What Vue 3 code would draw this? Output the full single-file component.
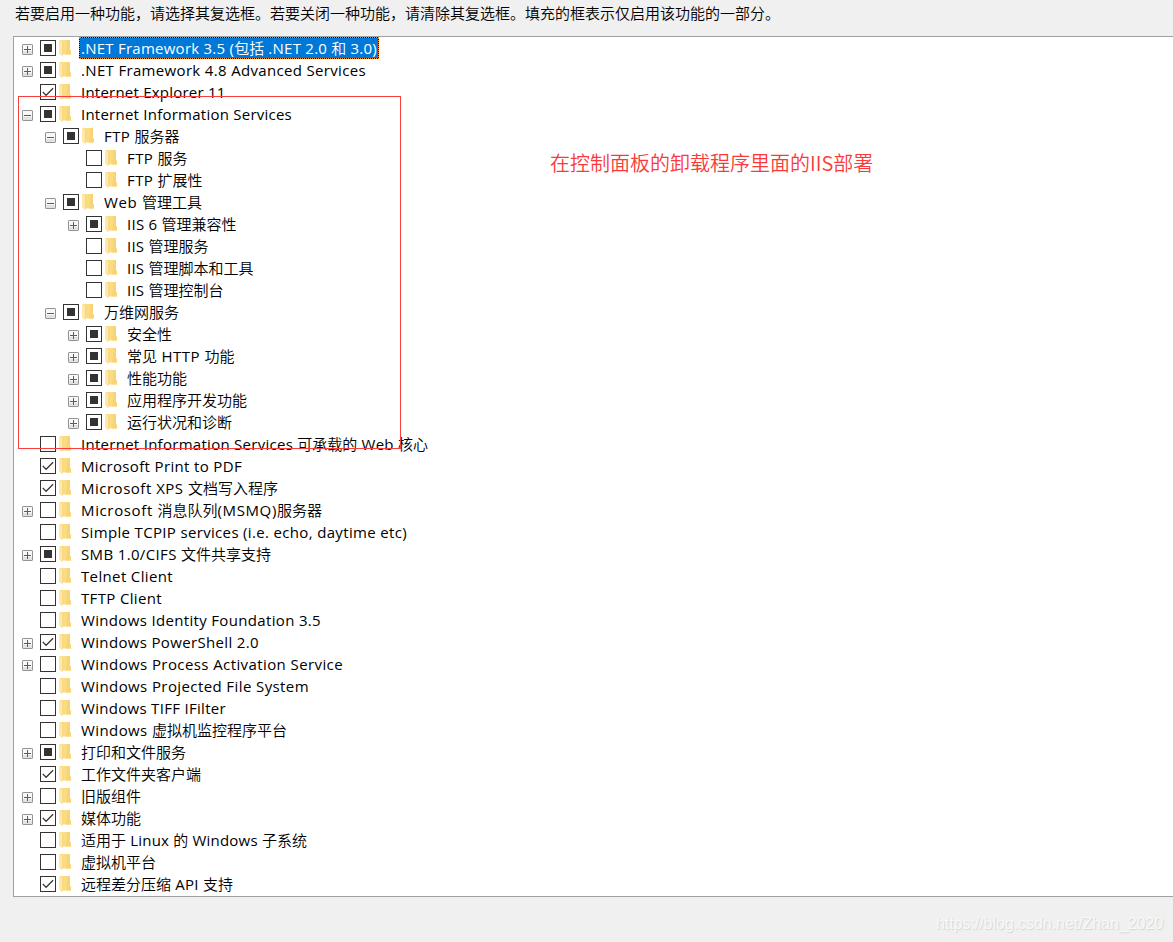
<script setup>
import { ref, onMounted } from 'vue'

// level, expander ('+', '-', ''), state (f: filled, c: checked, e: empty), label, label width
const features = [
  [0, '+', 'f', '.NET Framework 3.5 (包括 .NET 2.0 和 3.0)', 296],
  [0, '+', 'f', '.NET Framework 4.8 Advanced Services', 285],
  [0, '', 'c', 'Internet Explorer 11', 144.5],
  [0, '-', 'f', 'Internet Information Services', 211],
  [1, '-', 'f', 'FTP 服务器', 75.5],
  [2, '', 'e', 'FTP 服务', 60.5],
  [2, '', 'e', 'FTP 扩展性', 75.5],
  [1, '-', 'f', 'Web 管理工具', 98],
  [2, '+', 'f', 'IIS 6 管理兼容性', 109.5],
  [2, '', 'e', 'IIS 管理服务', 81.5],
  [2, '', 'e', 'IIS 管理脚本和工具', 126.5],
  [2, '', 'e', 'IIS 管理控制台', 96.5],
  [1, '-', 'f', '万维网服务', 0],
  [2, '+', 'f', '安全性', 0],
  [2, '+', 'f', '常见 HTTP 功能', 107.5],
  [2, '+', 'f', '性能功能', 0],
  [2, '+', 'f', '应用程序开发功能', 0],
  [2, '+', 'f', '运行状况和诊断', 0],
  [0, '', 'e', 'Internet Information Services 可承载的 Web 核心', 347],
  [0, '', 'c', 'Microsoft Print to PDF', 161],
  [0, '', 'c', 'Microsoft XPS 文档写入程序', 197],
  [0, '+', 'e', 'Microsoft 消息队列(MSMQ)服务器', 241],
  [0, '', 'e', 'Simple TCPIP services (i.e. echo, daytime etc)', 326],
  [0, '+', 'f', 'SMB 1.0/CIFS 文件共享支持', 190],
  [0, '', 'e', 'Telnet Client', 92],
  [0, '', 'e', 'TFTP Client', 81],
  [0, '', 'e', 'Windows Identity Foundation 3.5', 240],
  [0, '+', 'c', 'Windows PowerShell 2.0', 178],
  [0, '+', 'e', 'Windows Process Activation Service', 262],
  [0, '', 'e', 'Windows Projected File System', 228],
  [0, '', 'e', 'Windows TIFF IFilter', 145],
  [0, '', 'e', 'Windows 虚拟机监控程序平台', 206],
  [0, '+', 'f', '打印和文件服务', 0],
  [0, '', 'c', '工作文件夹客户端', 0],
  [0, '+', 'e', '旧版组件', 0],
  [0, '+', 'c', '媒体功能', 0],
  [0, '', 'e', '适用于 Linux 的 Windows 子系统', 226],
  [0, '', 'e', '虚拟机平台', 0],
  [0, '', 'c', '远程差分压缩 API 支持', 152],
].map(([level, expander, state, label, width]) => ({
  level, expander, state, width,
  runs: label.match(/[\x20-\x7e]+|[^\x20-\x7e]+/g).map((text) => ({ text, latin: /^[\x20-\x7e]/.test(text) })),
}))

const root = ref(null)
const tracking = ref(features.map(() => 0))

// Spread the latin runs so every label takes its nominal width.
onMounted(() => {
  const labels = root.value.querySelectorAll('.label')
  tracking.value = features.map((f, i) => {
    const chars = f.runs.filter((r) => r.latin).reduce((n, r) => n + r.text.length, 0)
    if (!f.width || !chars) return 0
    return (f.width - labels[i].querySelector('.text').getBoundingClientRect().width) / chars
  })
})
</script>

<template>
  <div ref="root" class="window">
    <p class="hint">若要启用一种功能，请选择其复选框。若要关闭一种功能，请清除其复选框。填充的框表示仅启用该功能的一部分。</p>
    <div class="tree">
      <div v-for="(f, i) in features" :key="i" class="row" :class="'level-' + f.level">
        <span class="expander">
          <svg v-if="f.expander" width="11" height="11" viewBox="0 0 11 11">
            <rect x=".5" y=".5" width="10" height="10" rx=".6" fill="#f8f8f8" stroke="#929292" />
            <path d="M1 7h9v3H1z" fill="#e2e2e2" />
            <path d="M2 5.5h7" stroke="#405c9b" />
            <path v-if="f.expander === '+'" d="M5.5 2v7" stroke="#405c9b" />
          </svg>
        </span>
        <svg class="box" width="16" height="16" viewBox="0 0 16 16">
          <rect x=".5" y=".5" width="15" height="15" fill="#fff" stroke="#333" />
          <rect v-if="f.state === 'f'" x="4" y="4" width="8" height="8" fill="#333" />
          <path v-if="f.state === 'c'" d="M2.7 7.9l3.4 3.4 7-7" fill="none" stroke="#333" stroke-width="1.25" />
        </svg>
        <svg class="folder" width="13" height="17" viewBox="0 0 13 17">
          <path d="M1 0h10v10.5h1v4H3L1 13z" fill="#fbdc82" />
          <path d="M8.5 0H11v10.5h1v4H7z" fill="#f6d477" />
          <path d="M0 0l3.6 2.2V13L2.7 16 0 13.5z" fill="#ffe9a9" />
          <path d="M3.6 2.2V13l-.9 3" fill="none" stroke="#f0cd70" stroke-width=".5" />
        </svg>
        <span class="label" :class="{ selected: i === 0 }"><span class="text" :style="{ '--tracking': tracking[i] + 'px' }"><span v-for="(r, j) in f.runs" :key="j" :class="{ latin: r.latin }">{{ r.text }}</span></span></span>
      </div>
    </div>
    <div class="outline"></div>
    <div class="note">在控制面板的卸载程序里面的IIS部署</div>
    <div class="watermark">https://blog.csdn.net/Zhan_2020</div>
  </div>
</template>

<style>
body { margin: 0; overflow: hidden; }
</style>

<style scoped>
.window {
  position: relative;
  box-sizing: border-box;
  width: 1173px;
  height: 942px;
  overflow: hidden;
  background: #f0f0f0;
  color: #000;
  font: 350 15px/22px "Noto Sans CJK SC", sans-serif;
}
.hint {
  margin: 0;
  height: 36px;
  padding-left: 15px;
  line-height: 25px;
  white-space: nowrap;
  box-sizing: border-box;
}
.tree {
  box-sizing: border-box;
  height: 861px;
  margin-left: 13px;
  border: 1px solid #a0a0a0;
  border-right: 0;
  background: #fff;
}
.row {
  display: flex;
  align-items: flex-start;
  height: 22px;
  padding-left: 8px;
}
.level-1 { padding-left: 31px; }
.level-2 { padding-left: 54px; }
.expander { width: 11px; height: 11px; margin: 7px 7px 0 0; }
svg { display: block; flex: none; }
.box { margin-top: 3px; }
.folder { margin: 3px 7px 0 3px; }
.label {
  height: 22px;
  padding: 0 2px;
  line-height: 22px;
  white-space: pre;
}
.text { display: inline-block; height: 22px; line-height: 21px; }
.latin {
  font-family: "Open Sans", "Noto Sans", sans-serif;
  font-size: 15px;
  font-weight: 370;
  line-height: 1;
  letter-spacing: var(--tracking);
}
.selected {
  color: #fff;
  background: #0078d7;
  outline: 1px dotted #ff8728;
  outline-offset: -1px;
  box-shadow: inset 0 0 0 1px #000;
}
.outline {
  position: absolute;
  left: 18px;
  top: 96px;
  width: 381px;
  height: 351px;
  border: 1px solid #fa3e3e;
}
.note {
  position: absolute;
  left: 550px;
  top: 148px;
  color: #fa3a3a;
  font: 350 20px/30px "Noto Sans CJK SC", sans-serif;
  white-space: nowrap;
}
.watermark {
  position: absolute;
  left: 936px;
  top: 914px;
  color: #f8f8f8;
  font: 16px/20px "Liberation Sans", Arial, sans-serif;
  letter-spacing: -.05px;
  text-shadow: 1px 1px 1px #d4d4d4;
  white-space: nowrap;
}
</style>
